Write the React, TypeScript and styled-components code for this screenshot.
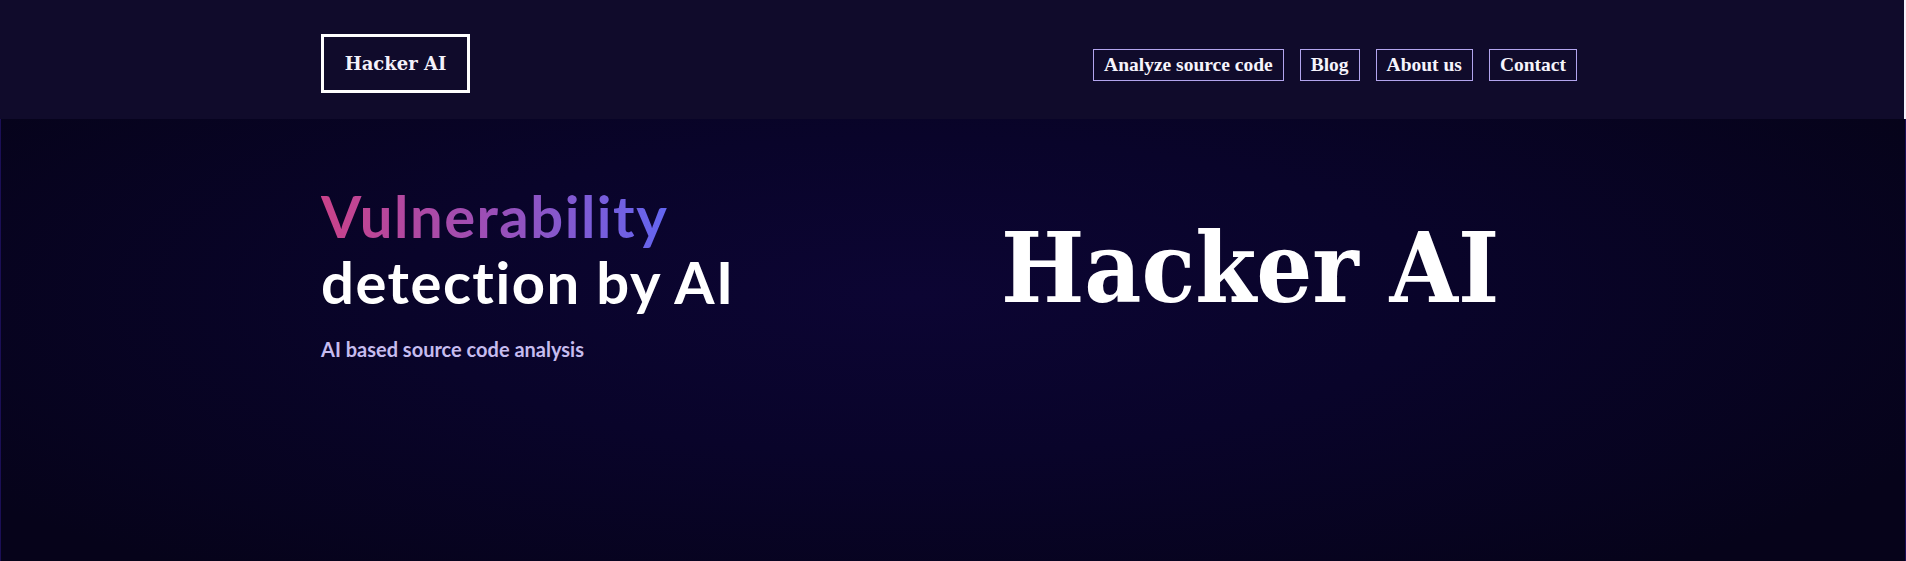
import { FunctionComponent } from 'react'
import styled, { createGlobalStyle } from 'styled-components'

const GlobalStyle = createGlobalStyle`
  html, body {
    margin: 0;
    padding: 0;
    background: #f4f2fa;
  }
  * {
    box-sizing: border-box;
  }
`

const Page = styled.div`
  width: 100%;
  min-height: 100vh;
  display: flex;
  flex-direction: column;
`

const Header = styled.header`
  height: 119px;
  width: calc(100% - 2px);
  background-color: #100b2b;
  display: flex;
  align-items: center;
  justify-content: space-between;
  padding: 0 327px 0 321px;
`

const Logo = styled.a`
  display: flex;
  align-items: center;
  justify-content: center;
  width: 149px;
  height: 59px;
  border: 3px solid #ffffff;
  color: #f4f2fa;
  font-family: "DejaVu Serif", "Liberation Serif", serif;
  font-weight: 700;
  font-size: 18px;
  text-decoration: none;
  margin-top: 8px;
`

const Nav = styled.nav`
  display: flex;
  gap: 16px;
  margin-top: 11px;
`

const NavLink = styled.a`
  display: flex;
  align-items: center;
  height: 32px;
  padding: 0 10px;
  border: 1px solid #b3a5ee;
  color: #f6f4fc;
  font-family: "Liberation Serif", serif;
  font-weight: 700;
  font-size: 19.5px;
  text-decoration: none;
`

const Hero = styled.section`
  flex: 1;
  border-left: 1px solid #1b0f55;
  border-right: 1px solid #1b0f55;
  background: radial-gradient(ellipse 60% 80% at 48% 40%, #0c0533 0%, #09042a 45%, #06031a 100%);
  display: grid;
  grid-template-columns: 628px 1fr;
  align-items: start;
  padding: 64px 0 0 320px;
  min-height: 442px;
`

const TextColumn = styled.div`
  display: flex;
  flex-direction: column;
`

const Title = styled.h2`
  margin: 0;
  font-family: "Lato", "Noto Sans", sans-serif;
  font-weight: 700;
  font-size: 58px;
  line-height: 66px;
  letter-spacing: 1.5px;
  color: #ffffff;
`

const Gradient = styled.span`
  background: linear-gradient(90deg, #c9428a 0%, #9a4fb8 50%, #6366f1 100%);
  -webkit-background-clip: text;
  background-clip: text;
  color: transparent;
`

const Subtitle = styled.p`
  margin: 22px 0 0;
  font-family: "Lato", "Noto Sans", sans-serif;
  font-weight: 700;
  font-size: 20px;
  color: #c6bcef;
`

const BigTitle = styled.h1`
  margin: 0;
  padding: 24px 0 0 52px;
  font-family: "DejaVu Serif Condensed", "DejaVu Serif", serif;
  font-weight: 700;
  font-size: 98px;
  line-height: 122px;
  color: #ffffff;
  white-space: nowrap;
`

const links = ['Analyze source code', 'Blog', 'About us', 'Contact']

const App: FunctionComponent = () => {
  return (
    <Page>
      <GlobalStyle />
      <Header>
        <Logo href="#">Hacker AI</Logo>
        <Nav>
          {links.map((l) => (
            <NavLink key={l} href="#">{l}</NavLink>
          ))}
        </Nav>
      </Header>
      <Hero>
        <TextColumn>
          <Title>
            <Gradient>Vulnerability</Gradient>
            <br />
            detection by AI
          </Title>
          <Subtitle>AI based source code analysis</Subtitle>
        </TextColumn>
        <BigTitle>Hacker AI</BigTitle>
      </Hero>
    </Page>
  )
}

export default App
